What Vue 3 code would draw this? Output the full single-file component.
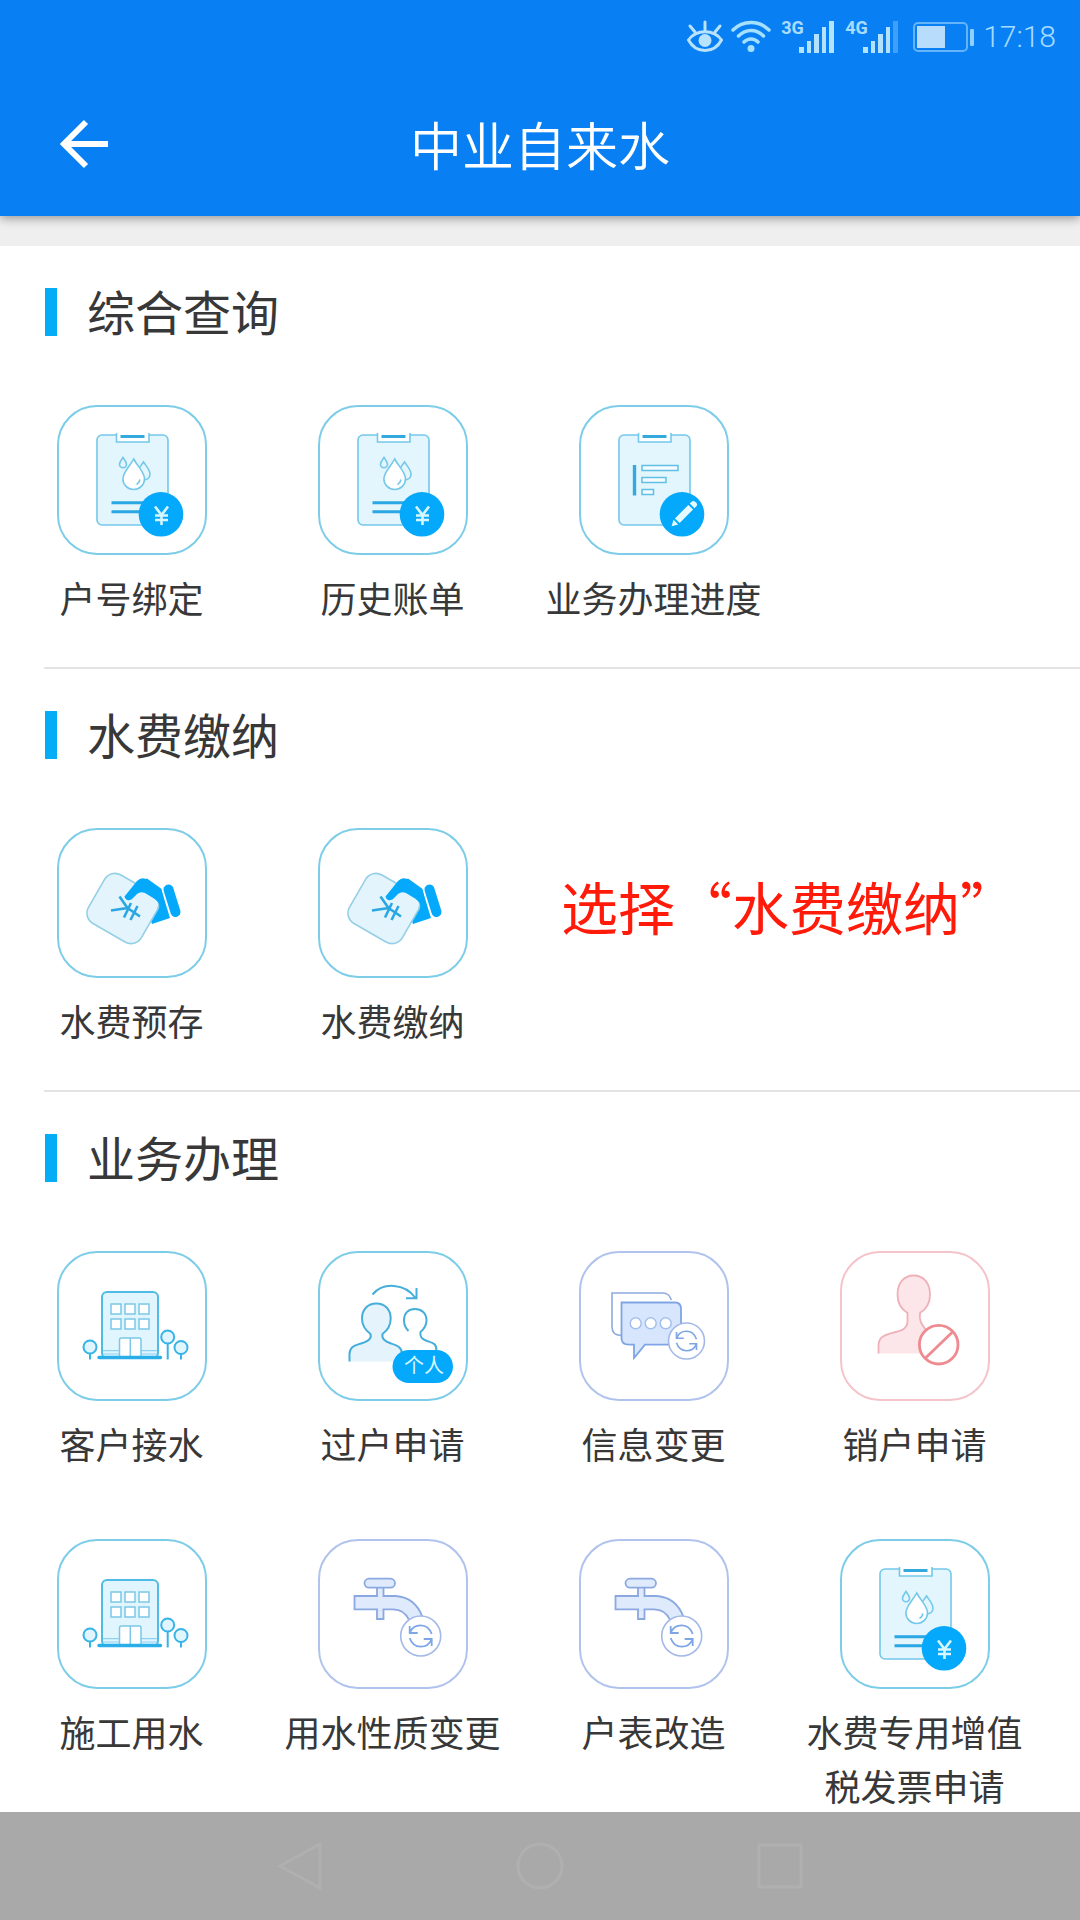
<script setup>
const sections = [
  {
    title: '综合查询',
    items: [
      { label: '户号绑定', icon: 'bill', tone: 'cyan' },
      { label: '历史账单', icon: 'bill', tone: 'cyan' },
      { label: '业务办理进度', icon: 'progress', tone: 'cyan' },
    ],
  },
  {
    title: '水费缴纳',
    note: '选择“水费缴纳”',
    items: [
      { label: '水费预存', icon: 'pay', tone: 'cyan' },
      { label: '水费缴纳', icon: 'pay', tone: 'cyan' },
    ],
  },
  {
    title: '业务办理',
    items: [
      { label: '客户接水', icon: 'building', tone: 'cyan' },
      { label: '过户申请', icon: 'transfer', tone: 'cyan', badge: '个人' },
      { label: '信息变更', icon: 'message', tone: 'violet' },
      { label: '销户申请', icon: 'cancel', tone: 'pink' },
      { label: '施工用水', icon: 'building', tone: 'cyan' },
      { label: '用水性质变更', icon: 'faucet', tone: 'violet' },
      { label: '户表改造', icon: 'faucet', tone: 'violet' },
      { label: '水费专用增值税发票申请', icon: 'bill', tone: 'cyan' },
    ],
  },
]
</script>

<template>
  <div class="page">
    <svg class="sprite" aria-hidden="true">
      <symbol id="clipboard" viewBox="0 0 150 150">
        <rect x="40" y="30" width="71" height="90" rx="5" fill="#e3f5fd" stroke="#74c8ea" stroke-width="1.6" />
        <path d="M59.500 28V37H92V28" fill="#fff" stroke="#74c8ea" stroke-width="1.6" />
        <path d="M61 28.500H90.500V34H61Z" fill="#fff" />
        <path d="M63.500 31.500H87.500" stroke="#34a9de" stroke-width="3" />
      </symbol>

      <symbol id="bill" viewBox="2 2 146 146">
        <use href="#clipboard" x="0" y="0" width="150" height="150" />
        <g fill="#e3f5fd" stroke="#74c8ea" stroke-width="1.600">
          <path d="M86.500 57C90 62 93 65 93 69C93 73 90 75 86.500 75S80 73 80 69C80 65 83 62 86.500 57Z" />
          <path d="M66 52.500C68 55.500 69.500 57 69.500 59.300A3.500 3.500 0 0 1 62.500 59.300C62.500 57 64 55.500 66 52.500Z" />
          <path fill="#fff" d="M76.700 54C81 62 87.500 67 87.500 74A10.800 10.500 0 0 1 65.900 74C65.900 67 72.500 62 76.700 54Z" />
          <path fill="none" d="M83 74.500C82.500 77 81.500 78.500 79.500 79.500" />
        </g>
        <path d="M54.500 97.700H90M54.500 106.700H90" stroke="#2ba7e3" stroke-width="3" />
        <circle cx="104" cy="109.300" r="22.300" fill="#05a9fb" />
        <path d="M98 101.500L104.500 110L111 101.500M104.500 110V120M98 110.500H111M98 115H111" fill="none" stroke="#d6f6ff" stroke-width="2.600" />
      </symbol>

      <symbol id="progress" viewBox="2 2 146 146">
        <use href="#clipboard" x="0" y="0" width="150" height="150" />
        <path d="M55.500 60V90.500" stroke="#34a9de" stroke-width="3.400" />
        <path d="M63 60.500H99V65.500H63ZM63 72.500H87V77.500H63ZM63 84.500H74.500V89.500H63Z" fill="#f4fbff" stroke="#5fbfe4" stroke-width="1.500" />
        <circle cx="103" cy="109.300" r="22.300" fill="#05a9fb" />
        <g transform="translate(105 109) rotate(45)" fill="#e6fbff">
          <path d="M-3.300 -9.500H3.300V9.500H-3.300Z" />
          <path d="M-3.300 -11.500V-14.500Q-3.300 -16.500 0 -16.500T3.300 -14.500V-11.500Z" />
          <path d="M-3.300 11.500H3.300L0 17.500Z" />
        </g>
      </symbol>

      <symbol id="pay" viewBox="2 2 146 146">
        <path d="M84 53L90 50.500L104 60.500L113 90L95 96L84 66Z" fill="#05a9fb" />
        <rect x="35.500" y="52.500" width="61" height="56" rx="12" transform="rotate(30 66 80.500)" fill="#e3f4fd" stroke="#95cfe6" stroke-width="1.600" />
        <path d="M67.500 68.500L80 53Q84 49 89 51L104.500 61.500L109 80L102.500 79.500Q102.500 74 97 70.500L88 65Q83.500 63 80 66L74.500 71.500Q69 74 67.500 68.500Z" fill="#05a9fb" />
        <path d="M111.500 61.500L118.500 84" stroke="#05a9fb" stroke-width="10" stroke-linecap="round" />
        <path d="M62.500 68.500L70.500 80L54 82.500M70.500 80L83 88.500M74 75L67 89.500M80.500 78L73.500 92" fill="none" stroke="#2aa7e2" stroke-width="2.600" />
      </symbol>

      <symbol id="building" viewBox="2 2 146 146">
        <rect x="45" y="41" width="56" height="66" rx="5" fill="#e0f5fe" stroke="#50bbe6" stroke-width="2" />
        <path d="M46 99.700H100M46 103H100" stroke="#8bd2ef" stroke-width="1.200" />
        <path d="M54 53H64V63H54ZM68 53H78V63H68ZM82 53H92V63H82ZM54 68H64V78H54ZM68 68H78V78H68ZM82 68H92V78H82Z" fill="#fff" stroke="#7bc8e8" stroke-width="1.500" />
        <path d="M62.500 106V89Q62.500 87 64.500 87H82Q84 87 84 89V106Z" fill="#fff" stroke="#7bc8e8" stroke-width="1.500" />
        <path d="M73.300 87V106" stroke="#7bc8e8" stroke-width="1.500" />
        <path d="M42 106.500H103.500" stroke="#2aaeea" stroke-width="3.400" stroke-linecap="round" />
        <g fill="#e0f5fe" stroke="#38b3e6" stroke-width="2">
          <path d="M33 102V108.500M110.700 92V108.500M124 103V108.500" />
          <circle cx="33" cy="96" r="6.500" />
          <circle cx="110.700" cy="86" r="6.500" />
          <circle cx="124" cy="96.500" r="6.500" />
        </g>
      </symbol>

      <symbol id="transfer" viewBox="2 2 146 146">
        <path d="M31.500 110.500V103C32 95 37 94.500 43 92.500C50 90 54 88 52.500 83C47 79 44 74 44 67.500C44 58 50 52.500 58.300 52.500S72.700 58 72.700 67.500C72.700 74 70 79 64.500 83C63.500 88 67 90 73 92.500C79 94.500 84 96 84 103V110.500Z" fill="#e5f4fc" />
        <g fill="none" stroke="#45aedb" stroke-width="2">
          <path d="M31.500 110.500V103C32 95 37 94.500 43 92.500C50 90 54 88 52.500 83C47 79 44 74 44 67.500C44 58 50 52.500 58.300 52.500S72.700 58 72.700 67.500C72.700 74 70 79 64.500 83C63.500 88 67 90 73 92.500C79 94.500 84 96 84 103" />
          <path d="M90.500 80C87.500 77 86 74 86 69.500C86 62 90.500 58 97 58S108.500 62 108.500 69.500C108.500 74 106 78 102.500 81C101.500 86 104 88 109 90C115 92 118.500 92 118.500 100" />
          <path d="M54.500 43.500C65 31 87 32 97.500 47M98.500 37V47.300H88" />
        </g>
        <rect x="74.500" y="99" width="60.500" height="33" rx="16.500" fill="#05a9fb" />
      </symbol>

      <symbol id="refresh" viewBox="-22 -22 44 44">
        <g fill="none" stroke="#7ea6e6" stroke-width="1.800">
          <path d="M-11 -10V-3H-3M-10.500 -4C-7 -12.500 7 -14 11 -2" />
          <path d="M11 10V3H3M10.500 4C7 12.500 -7 14 -11 2" />
        </g>
      </symbol>

      <symbol id="message" viewBox="2 2 146 146">
        <path d="M42 84.500Q33 84 33 76V42H84Q90 42 92.500 49" fill="none" stroke="#8eabe0" stroke-width="1.600" />
        <path d="M42.500 51.500H96Q102 51.500 102 58V93.700H66L55 107V93.700H50Q42.500 93.700 42.500 87Z" fill="#d8e6fd" stroke="#7fa5e4" stroke-width="1.800" />
        <g fill="#fff" stroke="#a3bfee" stroke-width="1.500">
          <circle cx="56.700" cy="72.300" r="5.500" />
          <circle cx="71.700" cy="72.300" r="5.500" />
          <circle cx="86.700" cy="72.300" r="5.500" />
        </g>
        <circle cx="107.500" cy="90" r="18" fill="#fff" stroke="#a3b9e8" stroke-width="1.600" />
        <use href="#refresh" x="87.500" y="70" width="40" height="40" />
      </symbol>

      <symbol id="cancel" viewBox="2 2 146 146">
        <path d="M38.500 102.500V94C39 86 44 84.500 50 82.500C60 80 67.500 79 67.500 70V62C61 58 57.500 51 57.500 43.500C57.500 32 64 24.500 73.700 24.500S90 32 90 43.500C90 51 86.500 58 80 62C79 69 81 73 86 79L96 102.500Z" fill="#fde6e9" />
        <path d="M38.500 102.500V94C39 86 44 84.500 50 82.500C60 80 67.500 79 67.500 70V62C61 58 57.500 51 57.500 43.500C57.500 32 64 24.500 73.700 24.500S90 32 90 43.500C90 51 86.500 58 80 62C79 69 81 73 86 79" fill="none" stroke="#f0b0b8" stroke-width="1.800" />
        <circle cx="98.700" cy="93.700" r="19.300" fill="#fff" stroke="#ee8b91" stroke-width="2.800" />
        <path d="M85.500 107L112.500 81" stroke="#ee8b91" stroke-width="2.800" />
      </symbol>

      <symbol id="faucet" viewBox="2 2 146 146">
        <g fill="#dfeafc" stroke="#8ba9e0" stroke-width="1.800">
          <path d="M59 46H65.500V60H59ZM59 68V80H65.500V68Z" />
          <rect x="46.500" y="39.700" width="30.500" height="9" rx="4.500" />
          <path d="M36.500 57H78C91 58 100 66 104.500 78L91 81C88 74 83 70.300 75 70.300H36.500Z" />
        </g>
        <path d="M60 55.500H64.500V71.500H60Z" fill="#dfeafc" />
        <circle cx="102.700" cy="97" r="20" fill="#fff" stroke="#a3b9e8" stroke-width="1.600" />
        <use href="#refresh" x="80.700" y="75" width="44" height="44" />
      </symbol>
    </svg>

    <header class="header">
      <div class="status">
        <svg width="36" height="34" viewBox="0 0 36 34" fill="none" stroke="#b9e2fd" stroke-width="3">
          <path d="M1.500 20C9 9 27 9 34.500 20C27 34 9 34 1.500 20Z" />
          <path d="M18 2V11M3 6L8 12M33 6L28 12" stroke-linecap="round" />
          <circle cx="18" cy="20.500" r="6.500" fill="#b9e2fd" stroke="none" />
        </svg>
        <svg class="wifi" width="40" height="34" viewBox="0 0 40 34" fill="none" stroke="#a5e0ff" stroke-width="3.500" stroke-linecap="round">
          <path d="M2 10C12 0 28 0 38 10M7.500 16C15 8.500 25 8.500 32.500 16M13 22C17 18 23 18 27 22" />
          <circle cx="20" cy="28.500" r="3.500" fill="#a5e0ff" stroke="none" />
        </svg>
        <span class="net">3G</span>
        <svg width="36" height="34" viewBox="0 0 36 34" fill="#b3e2ff">
          <path d="M0 27H5V33H0ZM8 21H12V33H8ZM15 14H20V33H15ZM23 7H27V33H23ZM30 1H35V33H30Z" />
        </svg>
        <span class="net">4G</span>
        <svg width="36" height="34" viewBox="0 0 36 34" fill="#b3e2ff">
          <path d="M0 27H5V33H0ZM8 21H12V33H8ZM15 14H20V33H15ZM23 7H27V33H23Z" />
          <path d="M30 1H35V33H30Z" fill="#3f9ffa" />
        </svg>
        <svg class="battery" width="62" height="34" viewBox="0 0 62 34">
          <rect x="1" y="3" width="53" height="28" rx="4" fill="none" stroke="#63b4fb" stroke-width="2" />
          <rect x="4" y="6" width="28" height="22" fill="#b8dcfb" />
          <rect x="57" y="9" width="4" height="17" rx="1" fill="#8fd0fd" />
        </svg>
        <time class="clock">17:18</time>
      </div>
      <div class="titlebar">
        <button class="back" type="button" aria-label="返回">
          <svg width="50" height="50" viewBox="0 0 50 50" fill="none" stroke="#fff" stroke-width="6">
            <path d="M26 3L4 25L26 47M4 25H48" />
          </svg>
        </button>
        <h1>中业自来水</h1>
      </div>
    </header>

    <main>
      <section v-for="section in sections" :key="section.title" class="section">
        <h2>{{ section.title }}</h2>
        <div class="grid">
          <a v-for="item in section.items" :key="item.label" class="item" href="#">
            <span class="tile" :class="item.tone">
              <svg viewBox="2 2 146 146" aria-hidden="true">
                <use :href="'#' + item.icon" x="2" y="2" width="146" height="146" />
                <text v-if="item.badge" class="badge" x="106" y="122">{{ item.badge }}</text>
              </svg>
            </span>
            <span class="label">{{ item.label }}</span>
          </a>
          <p v-if="section.note" class="note">{{ section.note }}</p>
        </div>
      </section>
    </main>

    <nav class="navbar">
      <button type="button" aria-label="后退">
        <svg width="50" height="50" viewBox="0 0 50 50"><path d="M45 3V47L5 25Z" /></svg>
      </button>
      <button type="button" aria-label="主页">
        <svg width="50" height="50" viewBox="0 0 50 50"><circle cx="25" cy="25" r="22" /></svg>
      </button>
      <button type="button" aria-label="最近任务">
        <svg width="50" height="50" viewBox="0 0 50 50"><path d="M4 4H46V46H4Z" /></svg>
      </button>
    </nav>
  </div>
</template>

<style>
body {
  background: #fff;
}
</style>

<style scoped>
.page {
  display: flex;
  flex-direction: column;
  min-height: 100vh;
  color: #383838;
  font-family: "Noto Sans CJK SC", sans-serif;
}

.sprite {
  position: absolute;
  width: 0;
  height: 0;
}

button {
  display: flex;
  padding: 0;
  border: 0;
  background: none;
}

.header {
  position: relative;
  height: 216px;
  background: #0880f3;
  box-shadow: 0 2px 10px rgba(0, 0, 0, 0.4);
}

.status {
  display: flex;
  align-items: center;
  justify-content: flex-end;
  height: 74px;
  padding-right: 24px;
  color: #a8dcff;
}

.status svg {
  flex: none;
}

.wifi {
  margin-left: 8px;
}

.net {
  width: 18px;
  height: 34px;
  margin-left: 10px;
  font: bold 18px/16px Roboto, sans-serif;
}

.battery {
  margin-left: 14px;
}

.clock {
  margin-left: 8px;
  font: 300 30px/34px Roboto, sans-serif;
}

.titlebar {
  display: grid;
  grid-template-columns: 110px 1fr 110px;
  align-items: center;
  height: 140px;
}

.back {
  margin-left: 60px;
}

h1 {
  margin: 0;
  color: #fff;
  font-size: 52px;
  font-weight: 350;
  line-height: 140px;
  text-align: center;
}

main {
  border-top: 30px solid #efefef;
}

.section {
  position: relative;
}

.section + .section {
  padding-top: 2px;
}

.section + .section::before {
  content: "";
  position: absolute;
  top: 0;
  right: 0;
  left: 44px;
  height: 2px;
  background: #e3e3e3;
}

.section:not(:last-child) {
  padding-bottom: 43px;
}

h2 {
  display: flex;
  align-items: flex-start;
  gap: 30px;
  margin: 0;
  padding: 42px 45px 69px;
  font-size: 48px;
  font-weight: 400;
  line-height: 44px;
}

h2::before {
  content: "";
  width: 12px;
  height: 48px;
  background: #05adf6;
}

.grid {
  display: grid;
  grid-template-columns: repeat(4, 1fr);
  row-gap: 69px;
  padding: 0 35px 0 1px;
}

.item {
  display: flex;
  flex-direction: column;
  align-items: center;
  gap: 15px;
  color: inherit;
  text-decoration: none;
}

.tile {
  box-sizing: border-box;
  width: 150px;
  height: 150px;
  border: 2px solid;
  border-radius: 40px;
}

.tile svg {
  display: block;
  width: 100%;
  height: 100%;
}

.badge {
  fill: #d8f7ff;
  font-size: 20px;
  text-anchor: middle;
}

.cyan {
  border-color: #7dcde8;
}

.violet {
  border-color: #b0c3ec;
}

.pink {
  border-color: #f5c3ca;
}

.label {
  padding: 0 20px;
  font-size: 36px;
  line-height: 54px;
  text-align: center;
}

.note {
  grid-column: span 2;
  margin: 0;
  padding-left: 38px;
  color: #ff1a0a;
  font-size: 57px;
  line-height: 154px;
  white-space: nowrap;
}

.navbar {
  display: grid;
  flex: 1;
  grid-template-columns: repeat(3, 240px);
  align-items: center;
  justify-content: center;
  min-height: 108px;
  background: #a9a9a9;
}

.navbar button {
  justify-content: center;
}

.navbar svg {
  fill: none;
  stroke: #b0b0b0;
  stroke-width: 3;
}
</style>
